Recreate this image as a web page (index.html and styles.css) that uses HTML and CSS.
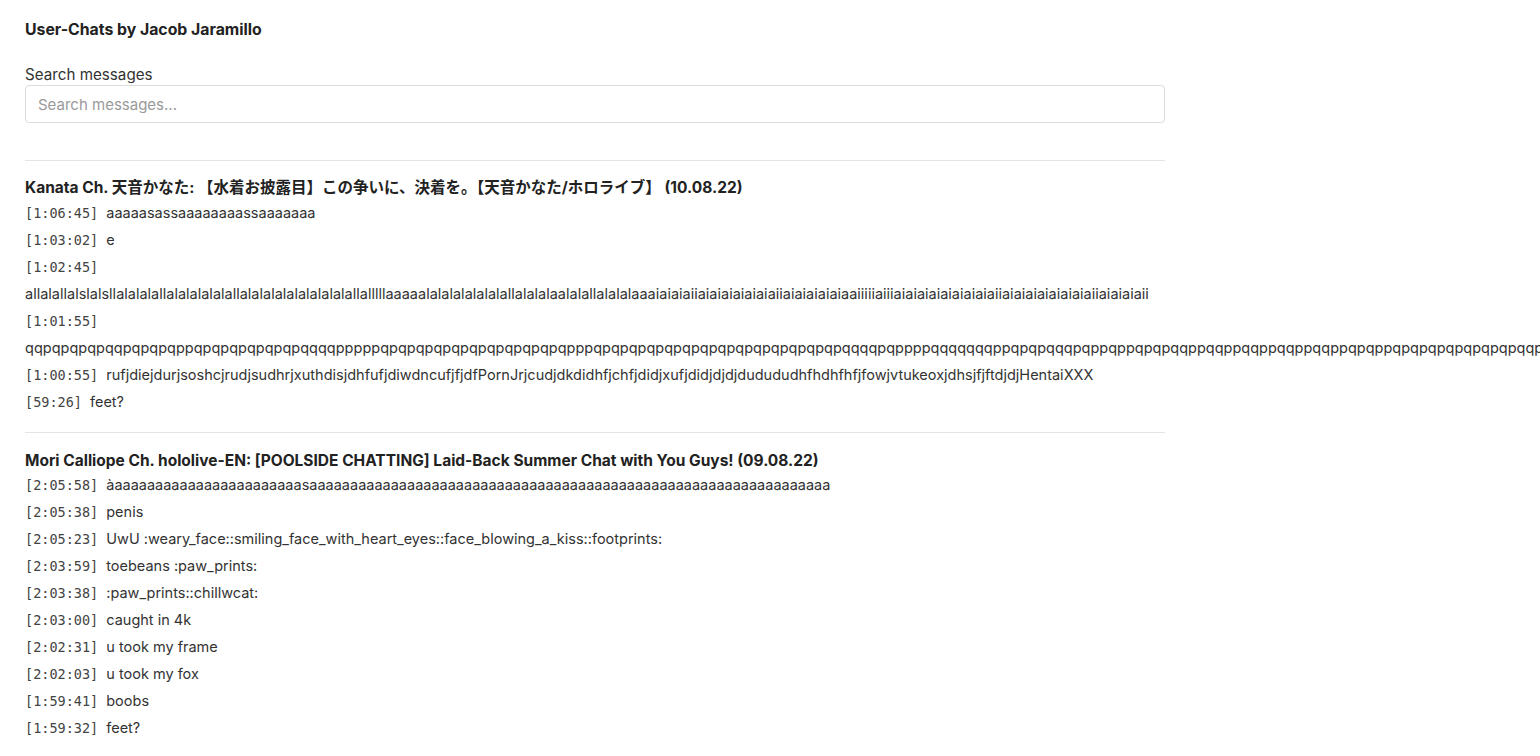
FILE: index.html
```html
<!DOCTYPE html>
<html lang="en">
<head>
<meta charset="utf-8">
<title>User-Chats by Jacob Jaramillo</title>
<link rel="stylesheet" href="styles.css">
</head>
<body>
<main class="page">
  <h1 class="page-title">User-Chats by Jacob Jaramillo</h1>
  <label class="search-label" for="search">Search messages</label>
  <input class="search-input" id="search" type="text" placeholder="Search messages...">

  <section class="stream">
    <h2 class="stream-title">Kanata Ch. 天音かなた: 【水着お披露目】この争いに、決着を。【天音かなた/ホロライブ】 (10.08.22)</h2>
    <div class="msg"><span class="ts">[1:06:45]</span> <span class="txt">aaaaasassaaaaaaaassaaaaaaa</span></div>
    <div class="msg"><span class="ts">[1:03:02]</span> <span class="txt">e</span></div>
    <div class="msg"><span class="ts">[1:02:45]</span> <span class="txt">allalallalslalsllalalalallalalalalalallalalalalalalalalalallalllllaaaaalalalalalalalallalalalaalalallalalalaaaiaiaiaiiaiaiaiaiaiaiaiiaiaiaiaiaiaaiiiiiaiiiaiaiaiaiaiaiaiaiaiiaiaiaiaiaiaiaiaiiaiaiaiaii</span></div>
    <div class="msg"><span class="ts">[1:01:55]</span> <span class="txt">qqpqpqpqpqqpqpqpqppqpqpqpqpqpqpqqqqpppppqpqpqpqpqpqpqpqpqpqpqpppqpqpqpqpqpqpqpqpqpqpqpqpqpqpqqqqpqppppqqqqqqqppqpqpqqqpqppqppqpqpqqppqqppqqppqqppqqppqpqppqpqpqpqpqpqpqpqqppqpqpqpqpqpq</span></div>
    <div class="msg"><span class="ts">[1:00:55]</span> <span class="txt">rufjdiejdurjsoshcjrudjsudhrjxuthdisjdhfufjdiwdncufjfjdfPornJrjcudjdkdidhfjchfjdidjxufjdidjdjdjdudududhfhdhfhfjfowjvtukeoxjdhsjfjftdjdjHentaiXXX</span></div>
    <div class="msg"><span class="ts">[59:26]</span> <span class="txt">feet?</span></div>
  </section>

  <section class="stream">
    <h2 class="stream-title">Mori Calliope Ch. hololive-EN: [POOLSIDE CHATTING] Laid-Back Summer Chat with You Guys! (09.08.22)</h2>
    <div class="msg"><span class="ts">[2:05:58]</span> <span class="txt">àaaaaaaaaaaaaaaaaaaaaaaasaaaaaaaaaaaaaaaaaaaaaaaaaaaaaaaaaaaaaaaaaaaaaaaaaaaaaaaaaaaaaaaa</span></div>
    <div class="msg"><span class="ts">[2:05:38]</span> <span class="txt">penis</span></div>
    <div class="msg"><span class="ts">[2:05:23]</span> <span class="txt">UwU :weary_face::smiling_face_with_heart_eyes::face_blowing_a_kiss::footprints:</span></div>
    <div class="msg"><span class="ts">[2:03:59]</span> <span class="txt">toebeans :paw_prints:</span></div>
    <div class="msg"><span class="ts">[2:03:38]</span> <span class="txt">:paw_prints::chillwcat:</span></div>
    <div class="msg"><span class="ts">[2:03:00]</span> <span class="txt">caught in 4k</span></div>
    <div class="msg"><span class="ts">[2:02:31]</span> <span class="txt">u took my frame</span></div>
    <div class="msg"><span class="ts">[2:02:03]</span> <span class="txt">u took my fox</span></div>
    <div class="msg"><span class="ts">[1:59:41]</span> <span class="txt">boobs</span></div>
    <div class="msg"><span class="ts">[1:59:32]</span> <span class="txt">feet?</span></div>
  </section>
</main>
</body>
</html>
```
FILE: styles.css
```css
html {
  scrollbar-width: none;
}
html::-webkit-scrollbar {
  display: none;
}
body {
  margin: 0;
  background: #ffffff;
  color: #333333;
  font-family: Inter, "Noto Sans CJK JP", sans-serif;
}
.page {
  width: 1140px;
  padding: 19px 25px 20px;
}
.page-title {
  margin: 0;
  font-size: 15.8px;
  line-height: 22px;
  font-weight: 700;
  color: #222222;
}
.search-label {
  display: block;
  margin-top: 23px;
  font-size: 15.2px;
  line-height: 21px;
  color: #333333;
}
.search-input {
  display: block;
  box-sizing: border-box;
  width: 100%;
  height: 38px;
  margin: 0;
  padding: 0 12px;
  border: 1px solid #dcdcdc;
  border-radius: 4px;
  font-family: Inter, sans-serif;
  font-size: 15px;
  color: #333333;
  outline: none;
}
.search-input::placeholder {
  color: #9a9a9a;
}
.stream {
  border-top: 1px solid #e4e4e4;
  margin-top: 37px;
  padding-top: 16px;
}
.stream + .stream {
  margin-top: 17px;
}
.stream-title {
  margin: 0;
  font-size: 15.5px;
  line-height: 22px;
  font-weight: 700;
  color: #222222;
}
.stream + .stream .stream-title {
  padding-top: 1px;
  line-height: 21px;
}
.msg {
  font-size: 14.5px;
  line-height: 27px;
  color: #333333;
}
.ts {
  font-family: "DejaVu Sans Mono", monospace;
  font-size: 13.5px;
  line-height: 1;
  margin-right: 4px;
  color: #444444;
}
.txt {
  line-height: 1;
}
```
